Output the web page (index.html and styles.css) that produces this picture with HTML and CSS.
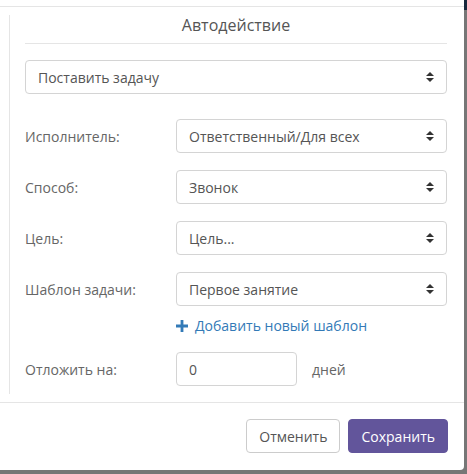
FILE: index.html
```html
<!DOCTYPE html>
<html>
<head>
    <title>Автодействие</title>
    <link rel="stylesheet" href="styles.css">
</head>
<body>
    <div class="topbar"></div>

    <div class="modal">
        <div class="modal-header"></div>

        <div class="modal-body">
            <div class="pane">
                <div class="pane-title">Автодействие</div>

                <div class="select-wrap">
                    <select class="form-control">
                        <option>Поставить задачу</option>
                    </select>
                    <svg class="caret" width="8" height="10" viewBox="0 0 8 10"><path d="M0 4L4 0L8 4Z M0 6L8 6L4 10Z" fill="#333"/></svg>
                </div>

                <div class="form-rows">
                    <div class="form-row">
                        <label>Исполнитель:</label>
                        <div class="select-wrap">
                            <select class="form-control">
                                <option>Ответственный/Для всех</option>
                            </select>
                            <svg class="caret" width="8" height="10" viewBox="0 0 8 10"><path d="M0 4L4 0L8 4Z M0 6L8 6L4 10Z" fill="#333"/></svg>
                        </div>
                    </div>
                    <div class="form-row">
                        <label>Способ:</label>
                        <div class="select-wrap">
                            <select class="form-control">
                                <option>Звонок</option>
                            </select>
                            <svg class="caret" width="8" height="10" viewBox="0 0 8 10"><path d="M0 4L4 0L8 4Z M0 6L8 6L4 10Z" fill="#333"/></svg>
                        </div>
                    </div>
                    <div class="form-row">
                        <label>Цель:</label>
                        <div class="select-wrap">
                            <select class="form-control">
                                <option>Цель...</option>
                            </select>
                            <svg class="caret" width="8" height="10" viewBox="0 0 8 10"><path d="M0 4L4 0L8 4Z M0 6L8 6L4 10Z" fill="#333"/></svg>
                        </div>
                    </div>
                    <div class="form-row">
                        <label>Шаблон задачи:</label>
                        <div class="select-wrap">
                            <select class="form-control">
                                <option>Первое занятие</option>
                            </select>
                            <svg class="caret" width="8" height="10" viewBox="0 0 8 10"><path d="M0 4L4 0L8 4Z M0 6L8 6L4 10Z" fill="#333"/></svg>
                        </div>
                    </div>
                </div>

                <a class="add-link" href="#">
                    <svg width="12" height="12" viewBox="0 0 12 12"><path d="M4.6 0H7.4V4.6H12V7.4H7.4V12H4.6V7.4H0V4.6H4.6Z" fill="#337ab7"/></svg>
                    Добавить новый шаблон
                </a>

                <div class="form-row">
                    <label>Отложить на:</label>
                    <input class="form-control days" type="text" value="0">
                    <span class="unit">дней</span>
                </div>
            </div>
        </div>

        <div class="modal-footer">
            <button class="btn btn-default">Отменить</button>
            <button class="btn btn-primary">Сохранить</button>
        </div>
    </div>
</body>
</html>
```

FILE: styles.css
```css
body {
    margin: 0;
    background-color: #767676;
    font-family: "Open Sans", "Liberation Sans", sans-serif;
    font-size: 14px;
    color: #555;
    position: relative;
    width: 467px;
    height: 474px;
    overflow: hidden;
}

/* app navbar peeking out behind the backdrop */
.topbar {
    position: absolute;
    top: 0;
    right: 0;
    width: 3px;
    height: 10px;
    background-color: #17283d;
}

.modal {
    position: relative;
    width: 464px;
    height: 470px;
    background-color: #fff;
    border-bottom-right-radius: 4px;
    display: flex;
    flex-direction: column;
}

.modal-header {
    height: 6px;
    border-bottom: 1px solid #e5e5e5;
}

.modal-body {
    padding: 8px 17px 8px 9px;
}

.pane {
    border-left: 1px solid #e5e5e5;
    padding: 0 0 8px 15px;
}

.pane-title {
    font-size: 16px;
    line-height: 20px;
    text-align: center;
    color: #555;
    padding-bottom: 8px;
    border-bottom: 1px solid #e5e5e5;
    margin-bottom: 16px;
}

.select-wrap {
    position: relative;
    flex: 1;
}

.form-control {
    display: block;
    box-sizing: border-box;
    width: 100%;
    height: 34px;
    padding: 6px 12px;
    font-family: inherit;
    font-size: 14px;
    color: #555;
    background-color: #fff;
    border: 1px solid #d4d4d4;
    border-radius: 4px;
    appearance: none;
    -webkit-appearance: none;
    outline: none;
}

.caret {
    position: absolute;
    right: 13px;
    top: 12px;
    pointer-events: none;
}

.form-rows {
    display: flex;
    flex-direction: column;
    gap: 17px;
    margin-top: 25px;
}

.form-row {
    display: flex;
    align-items: center;
}

.form-row label {
    width: 151px;
    flex-shrink: 0;
    color: #666;
}

.add-link {
    display: flex;
    align-items: center;
    gap: 7px;
    margin: 10px 0 16px 151px;
    line-height: 20px;
    color: #337ab7;
    text-decoration: none;
}

.form-control.days {
    width: 121px;
}

.unit {
    margin-left: 15px;
    color: #666;
}

.modal-footer {
    border-top: 1px solid #e5e5e5;
    padding: 16px 16px 0 0;
    display: flex;
    justify-content: flex-end;
    gap: 8px;
}

.btn {
    height: 34px;
    padding: 0 12px;
    font-family: inherit;
    font-size: 14px;
    border-radius: 4px;
    cursor: pointer;
}

.btn-default {
    background-color: #fff;
    color: #555;
    border: 1px solid #ccc;
}

.btn-primary {
    background-color: #62559b;
    color: #fff;
    border: 1px solid #62559b;
}
```
